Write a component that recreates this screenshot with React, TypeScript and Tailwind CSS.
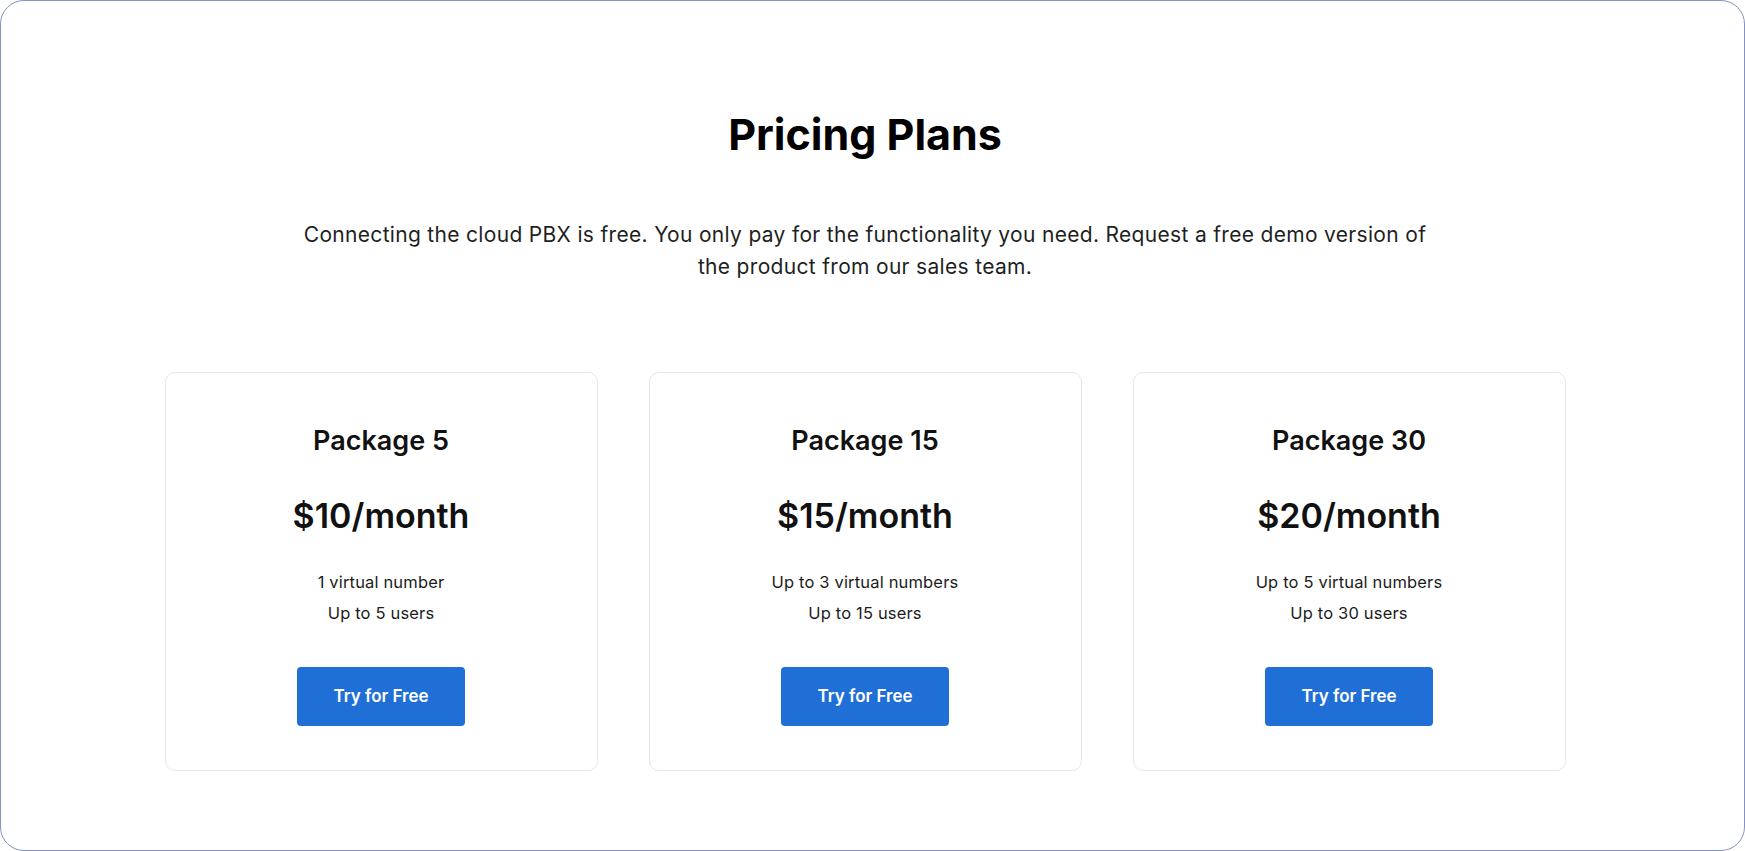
import React from 'react'

const PLANS = [
  { name: 'Package 5', price: '$10/month', features: ['1 virtual number', 'Up to 5 users'] },
  { name: 'Package 15', price: '$15/month', features: ['Up to 3 virtual numbers', 'Up to 15 users'] },
  { name: 'Package 30', price: '$20/month', features: ['Up to 5 virtual numbers', 'Up to 30 users'] },
]

function PlanCard({ name, price, features }: { name: string; price: string; features: string[] }) {
  return (
    <div className="w-[433px] flex flex-col items-center bg-white border border-[#e5e7ee] rounded-[10px] pt-[52px] pb-[44px]">
      <h3 className="text-[27px] leading-[32px] font-semibold text-[#111]">{name}</h3>
      <p className="mt-[39px] text-[34px] leading-[40px] font-semibold text-[#111]">{price}</p>
      <ul className="mt-[31px] text-[16.5px] leading-[31px] tracking-[0.01em] text-[#1c1c1c] text-center">
        {features.map((f) => (
          <li key={f}>{f}</li>
        ))}
      </ul>
      <button className="mt-[38px] w-[168px] h-[59px] rounded-[4px] bg-[#1f6fd6] text-white text-[17px] font-semibold">
        Try for Free
      </button>
    </div>
  )
}

export default function App() {
  return (
    <div className="h-[851px] w-full bg-white font-['Inter',sans-serif]">
      <div className="h-full border-[1.5px] border-[#8591c2] rounded-[24px] flex flex-col items-center pt-[107px] pr-[15px]">
        <h1 className="text-[43px] leading-[52px] font-bold text-black">Pricing Plans</h1>
        <p className="mt-[59px] max-w-[1150px] text-center text-[21px] leading-[32px] tracking-[0.015em] text-[#1f1f1f]">
          Connecting the cloud PBX is free. You only pay for the functionality you need. Request a free demo version of{' '}
          <br />
          the product from our sales team.
        </p>
        <div className="mt-[89px] flex gap-[51px]">
          {PLANS.map((p) => (
            <PlanCard key={p.name} {...p} />
          ))}
        </div>
      </div>
    </div>
  )
}
